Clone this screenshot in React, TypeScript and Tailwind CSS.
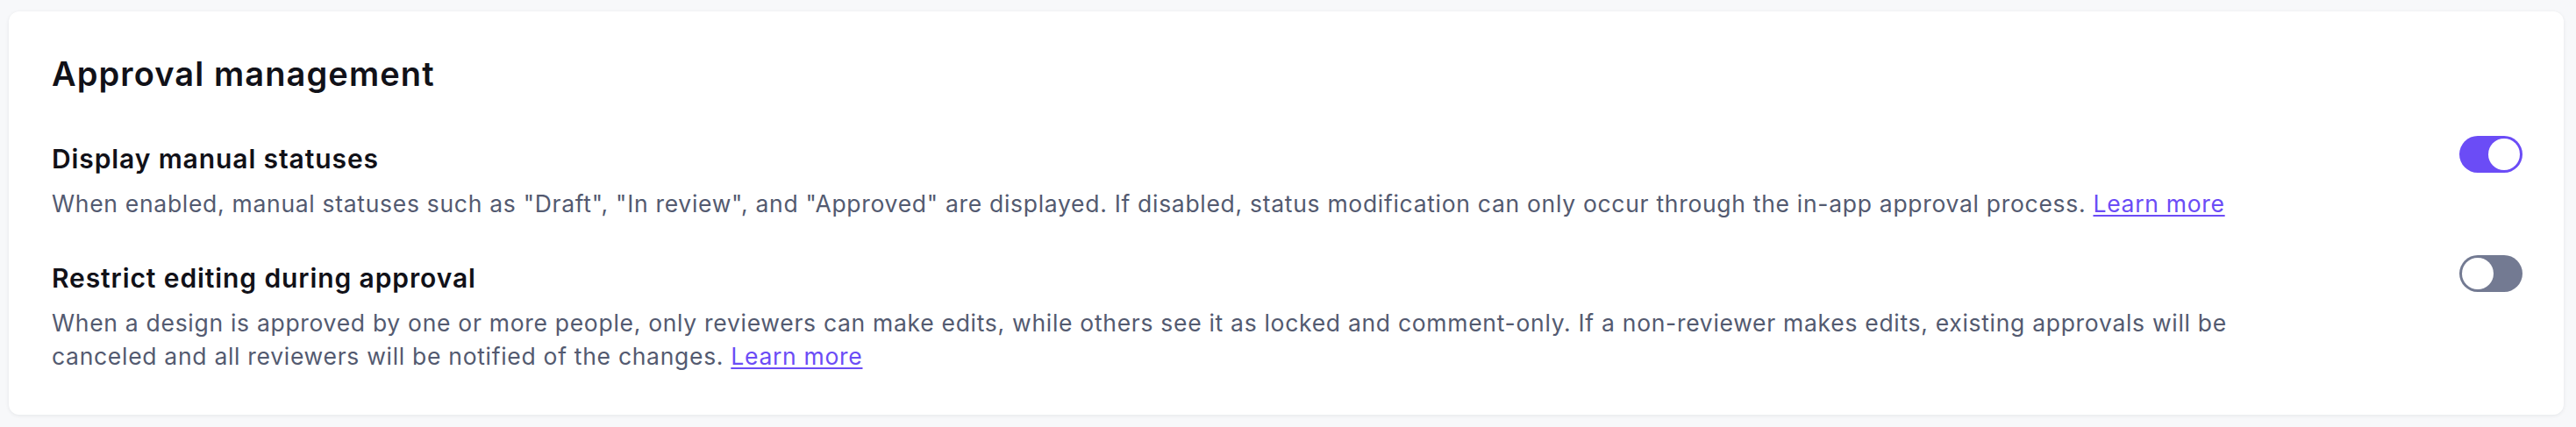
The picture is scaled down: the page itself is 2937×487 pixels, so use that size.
import { useState } from 'react'

interface Setting {
  id: string
  title: string
  description: string
  enabled: boolean
}

const settings: Setting[] = [
  {
    id: 'manual-statuses',
    title: 'Display manual statuses',
    description:
      'When enabled, manual statuses such as "Draft", "In review", and "Approved" are displayed. If disabled, status modification can only occur through the in-app approval process.',
    enabled: true,
  },
  {
    id: 'restrict-editing',
    title: 'Restrict editing during approval',
    description:
      'When a design is approved by one or more people, only reviewers can make edits, while others see it as locked and comment-only. If a non-reviewer makes edits, existing approvals will be canceled and all reviewers will be notified of the changes.',
    enabled: false,
  },
]

function Toggle({ checked, onChange }: { checked: boolean; onChange: () => void }) {
  return (
    <button
      type="button"
      role="switch"
      aria-checked={checked}
      onClick={onChange}
      className={`-mt-2 flex h-[42px] w-[72px] shrink-0 items-center rounded-full p-[3px] ${
        checked ? 'justify-end bg-[#6b4cf6]' : 'justify-start bg-[#737a92]'
      }`}
    >
      <span className="block h-9 w-9 rounded-full bg-white" />
    </button>
  )
}

export default function App() {
  const [values, setValues] = useState<Record<string, boolean>>(
    Object.fromEntries(settings.map((s) => [s.id, s.enabled]))
  )

  return (
    <div
      className="min-h-[487px] bg-[#f7f8fa] pt-[13px] pr-[14px] pb-[12px] pl-[10px]"
      style={{ fontFamily: 'Inter, "Noto Sans", sans-serif' }}
    >
      <div className="rounded-[12px] bg-white pt-[48px] pr-[47px] pb-[48px] pl-[49px] shadow-[0_1px_4px_rgba(16,24,40,0.08)]">
        {/* Header */}
        <h2 className="text-[38px] leading-[46px] font-semibold tracking-[1.1px] text-[#111118]">
          Approval management
        </h2>

        {/* Settings */}
        <div className="mt-[56px] flex flex-col gap-[48px]">
          {settings.map((s) => (
            <div key={s.id} className="flex items-start justify-between">
              <div className="max-w-[2548px]">
                <h3 className="text-[30px] leading-[36px] font-semibold tracking-[0.9px] text-[#111118]">
                  {s.title}
                </h3>
                <p className="mt-[14px] text-[26.5px] leading-[38px] tracking-[0.7px] text-[#535a70]">
                  {s.description}{' '}
                  <a href="#" className="text-[#6b4cf6] underline underline-offset-[3px]">
                    Learn more
                  </a>
                </p>
              </div>
              <Toggle
                checked={values[s.id]}
                onChange={() => setValues({ ...values, [s.id]: !values[s.id] })}
              />
            </div>
          ))}
        </div>
      </div>
    </div>
  )
}
